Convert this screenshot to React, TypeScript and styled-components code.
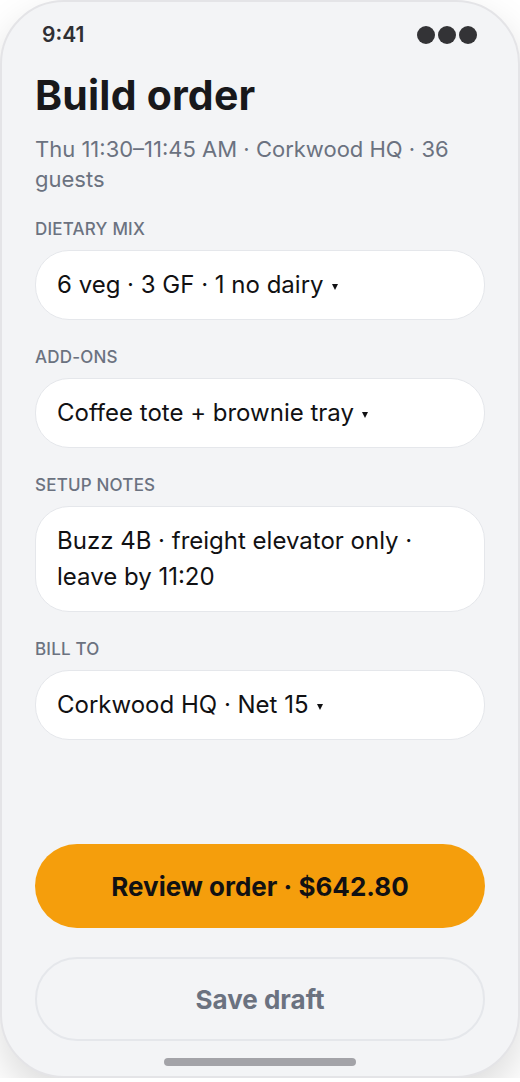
import React from "react";
import styled, { createGlobalStyle } from "styled-components";

const Global = createGlobalStyle`
  html, body { margin: 0; padding: 0; background: #ffffff; }
  body { font-family: Inter, "Noto Sans", sans-serif; -webkit-font-smoothing: antialiased; }
  * { box-sizing: border-box; }
`;

const Phone = styled.div`
  width: 520px;
  height: 1078px;
  border: 2px solid #e4e4e7;
  border-radius: 64px;
  background: #f3f4f6;
  box-shadow: 0 18px 40px rgba(0, 0, 0, 0.14);
  padding: 19px 33px 10px;
  display: flex;
  flex-direction: column;
  overflow: hidden;
`;

const StatusBar = styled.div`
  height: 28px;
  padding: 0 8px 0 7px;
  display: flex;
  align-items: center;
  justify-content: space-between;
`;

const Clock = styled.span`
  font-size: 21px;
  font-weight: 600;
  color: #2f2f33;
  line-height: 28px;
`;

const Dots = styled.div`
  display: flex;
  gap: 3px;
`;

const Dot = styled.span`
  width: 18px;
  height: 18px;
  border-radius: 50%;
  background: #333336;
`;

const Title = styled.h1`
  margin: 22px 0 0;
  font-size: 41px;
  line-height: 48px;
  font-weight: 700;
  color: #18181b;
  letter-spacing: 0.2px;
`;

const Subtitle = styled.p`
  margin: 15px 0 0;
  font-size: 22px;
  line-height: 30px;
  color: #6b7280;
`;

const Fields = styled.div`
  margin-top: 25px;
  display: flex;
  flex-direction: column;
  gap: 27px;
`;

const Field = styled.div`
  display: flex;
  flex-direction: column;
  gap: 11px;
`;

const Label = styled.div`
  font-size: 17px;
  line-height: 20px;
  font-weight: 500;
  color: #6b7280;
  text-transform: uppercase;
  letter-spacing: 0.2px;
`;

const Box = styled.div`
  background: #ffffff;
  border: 1px solid #e5e7eb;
  border-radius: 34px;
  padding: 16px 21px;
  font-size: 24px;
  line-height: 36px;
  color: #111113;
  display: flex;
  align-items: center;
`;

const Caret = styled.span`
  display: inline-block;
  margin-left: 8px;
  margin-top: 4px;
  width: 0;
  height: 0;
  border-left: 3.5px solid transparent;
  border-right: 3.5px solid transparent;
  border-top: 6px solid #111113;
`;

const Spacer = styled.div`
  flex: 1;
`;

const Button = styled.button<{ $primary?: boolean }>`
  height: 84px;
  width: 100%;
  border-radius: 42px;
  font-family: Inter, sans-serif;
  font-size: 26px;
  font-weight: 700;
  cursor: pointer;
  border: ${(p) => (p.$primary ? "none" : "2px solid #e5e7eb")};
  background: ${(p) => (p.$primary ? "#f59e0c" : "transparent")};
  color: ${(p) => (p.$primary ? "#111113" : "#6b7280")};
`;

const Buttons = styled.div`
  display: flex;
  flex-direction: column;
  gap: 29px;
`;

const HomeBar = styled.div`
  margin: 17px auto 0;
  width: 192px;
  height: 8px;
  border-radius: 4px;
  background: #a3a3a8;
`;

const fields: { label: string; value: string; select: boolean }[] = [
  { label: "Dietary mix", value: "6 veg · 3 GF · 1 no dairy", select: true },
  { label: "Add-ons", value: "Coffee tote + brownie tray", select: true },
  { label: "Setup notes", value: "Buzz 4B · freight elevator only · leave by 11:20", select: false },
  { label: "Bill to", value: "Corkwood HQ · Net 15", select: true },
];

export default function App() {
  return (
    <>
      <Global />
      <Phone>
        <StatusBar>
          <Clock>9:41</Clock>
          <Dots>
            <Dot />
            <Dot />
            <Dot />
          </Dots>
        </StatusBar>
        <Title>Build order</Title>
        <Subtitle>Thu 11:30–11:45 AM · Corkwood HQ · 36 guests</Subtitle>
        <Fields>
          {fields.map((f) => (
            <Field key={f.label}>
              <Label>{f.label}</Label>
              <Box>
                <span>{f.value}</span>
                {f.select && <Caret />}
              </Box>
            </Field>
          ))}
        </Fields>
        <Spacer />
        <Buttons>
          <Button $primary>Review order · $642.80</Button>
          <Button>Save draft</Button>
        </Buttons>
        <HomeBar />
      </Phone>
    </>
  );
}
